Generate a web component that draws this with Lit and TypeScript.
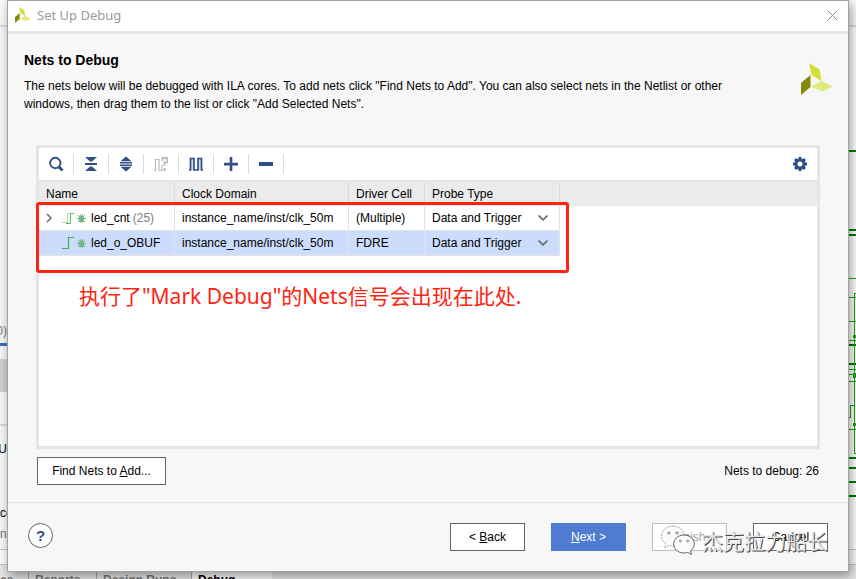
import { LitElement, html, css, svg } from "lit";
import { customElement, property } from "lit/decorators.js";

interface NetRow {
  name: string;
  count?: number;
  clock: string;
  driver: string;
  probe: string;
  bus: boolean;
  selected: boolean;
}

const NETS: NetRow[] = [
  { name: "led_cnt", count: 25, clock: "instance_name/inst/clk_50m", driver: "(Multiple)", probe: "Data and Trigger", bus: true, selected: false },
  { name: "led_o_OBUF", clock: "instance_name/inst/clk_50m", driver: "FDRE", probe: "Data and Trigger", bus: false, selected: true },
];

const PROBES = ["Data and Trigger", "Data", "Trigger"];

const TOOLS = [
  { label: "Search", icon: svg`<circle cx="7.300" cy="7" r="5.200" fill="none" stroke="#2f4f86" stroke-width="1.900"/><path d="M11 11L14.500 14.500" stroke="#2f4f86" stroke-width="3"/>` },
  { label: "Collapse All", icon: svg`<path d="M2 1h12l-5 4.5H7zM2 15h12l-5-4.5H7z" fill="#2f4f86"/><path d="M2 7h12v2H2z" fill="#2f4f86"/>` },
  { label: "Expand All", icon: svg`<path d="M8 0.500l5.500 4.700h-11zM8 15.500l5.500-4.700h-11z" fill="#2f4f86"/><path d="M2 6.100h12v1.400H2zM2 8.500h12v1.400H2z" fill="#2f4f86"/>` },
  { label: "Set clock domain", disabled: true, icon: svg`<path d="M1 14.500h1.500v-11H6v11h3V9" fill="none" stroke="#bdbdbd" stroke-width="1.200"/><path d="M9.500 5V2h4.500v4.500h-2.500V10" fill="none" stroke="#bdbdbd" stroke-width="1.800"/><path d="M10.600 12h2v3h-2z" fill="#bdbdbd"/>` },
  { label: "Show waveform", icon: svg`<path d="M2 3h4v11H2zM10 3h4v11h-4z" fill="#d3dae8"/><path d="M1 14h1.500V2.500H6V14h4V2.500h3.500V14H15" fill="none" stroke="#2f4f86" stroke-width="1.700"/>` },
  { label: "Add", icon: svg`<path d="M1 6.800h14v2.600H1zM6.700 1h2.600v14H6.700z" fill="#2f4f86"/>` },
  { label: "Remove", icon: svg`<path d="M1 6h14v4H1z" fill="#2f4f86"/>` },
];

const logo = (size: number) => html`<svg width=${size} height=${size} viewBox="0 0 32 32" aria-hidden="true">
  <path d="M8 0L18.500 6.500L20.500 18L10.500 12z" fill="#d3de36"/>
  <path d="M0 20L9.500 12v12L0 32z" fill="#868a0b"/>
  <path d="M10 23.500L20.500 18L32 23.500L21.500 28.500z" fill="#e2ea7c"/>
</svg>`;

@customElement("design-backdrop")
export class DesignBackdrop extends LitElement {
  static styles = css`
    :host { display: flex; flex-direction: column; overflow: hidden; background: #f7f7f7; font: 12px/18px "Liberation Sans", Arial, sans-serif; color: #000; }
    .top { height: 25px; flex: none; background: #f9f9f9; border-bottom: 2px solid #d9d9d9; }
    .middle { flex: 1; display: flex; justify-content: space-between; overflow: hidden; }
    .side { width: 7px; display: flex; flex-direction: column; overflow: hidden; }
    .frag { display: flex; height: 18px; white-space: nowrap; }
    .end { justify-content: flex-end; }
    .grey { color: #777; }
    .gap-l { height: 295px; flex: none; }
    .bar { height: 3px; margin-top: 3px; background: #3d6dc4; }
    .block { height: 33px; margin-top: 13px; background: #d2d2d2; }
    .rule { height: 2px; margin: 32px 0 14px; background: #d9d9d9; }
    .low { margin-top: 46px; }
    .lower { margin-top: 3px; }
    .right { width: 7px; background: #fff; }
    .status { height: 14px; flex: none; background: #fbfbfb; border-top: 1px solid #c4c4c4; border-bottom: 1px solid #c4c4c4; }
    .tabs { height: 14px; flex: none; display: flex; overflow: hidden; background: #e6e6e6; color: #777; font-weight: bold; font-size: 12px; }
    .tab { box-sizing: border-box; padding: 6px 6px 0; border-right: 1px solid #aaa; white-space: nowrap; }
    .t0 { width: 29px; padding-left: 0; }
    .t1 { width: 68px; }
    .t2 { width: 95px; }
    .t3 { width: 80px; border: 0; background: #f9f9f9; color: #000; }
  `;
  render() {
    return html`
      <div class="top"></div>
      <div class="middle">
        <div class="side">
          <div class="gap-l"></div>
          <div class="frag end grey">0)</div>
          <div class="bar"></div>
          <div class="block"></div>
          <div class="rule"></div>
          <div class="frag end">U</div>
          <div class="frag low">ce</div>
          <div class="frag lower grey">ne</div>
        </div>
        <svg class="right" height="522" viewBox="0 27 7 522" aria-hidden="true">
          <g fill="#007a00">
            ${[150, 229, 234, 344, 363, 457, 467, 481, 495].map((y) => svg`<rect x="0" y=${y} width="7" height="2"/>`)}
          </g>
          <g fill="#1ca60c">
            ${[278, 297, 321, 340, 369, 374, 381, 429].map((y) => svg`<rect x="0" y=${y} width="7" height="1"/>`)}
            <rect x="5" y="293" width="1" height="161"/><rect x="5" y="293" width="2" height="1"/><rect x="5" y="453" width="2" height="1"/>
            <rect x="4" y="335" width="3" height="3"/><rect x="4" y="373" width="3" height="5"/><rect x="4" y="423" width="3" height="3"/>
            <path d="M0 417h1v-12h5v1H2v12H0z"/>
          </g>
        </svg>
      </div>
      <div class="status"></div>
      <div class="tabs">
        <span class="tab t0">es</span><span class="tab t1">Reports</span><span class="tab t2">Design Runs</span><span class="tab t3">Debug</span>
      </div>`;
  }
}

@customElement("nets-table")
export class NetsTable extends LitElement {
  @property({ attribute: false }) rows: NetRow[] = [];
  static styles = css`
    :host { display: block; }
    .table { width: 100%; table-layout: fixed; border-collapse: separate; border-spacing: 0; font: 12px/16px "Liberation Sans", Arial, sans-serif; color: #000; }
    .name { width: 136px; }
    .clock { width: 174px; }
    .driver { width: 76px; }
    .probe { width: 135px; }
    th { box-sizing: border-box; height: 24px; padding: 0 0 0 7px; text-align: left; font-weight: normal; background: #ebebeb; border-right: 1px solid #dcdcdc; white-space: nowrap; }
    th:last-child, td:last-child { border: 0; }
    td { box-sizing: border-box; height: 25px; padding: 0 0 0 7px; border-right: 1px solid #e2e2e2; border-bottom: 1px solid #e2e2e2; white-space: nowrap; }
    .selected td:not(:last-child) { background: #cbdcfd; }
    .cell { display: flex; align-items: center; }
    .twist { width: 16px; height: 16px; padding: 0; border: 0; background: none; display: flex; align-items: center; }
    .bug { margin: 0 5px 0 2px; }
    .count { color: #808080; margin-left: 3px; }
    .pick { flex: 1; min-width: 0; appearance: none; border: 0; padding: 0; margin: 0; background: none; font: inherit; color: inherit; }
    .arrow { margin-right: 11px; }
  `;
  render() {
    return html`<table class="table">
      <colgroup><col class="name"><col class="clock"><col class="driver"><col class="probe"><col></colgroup>
      <thead><tr><th>Name</th><th>Clock Domain</th><th>Driver Cell</th><th>Probe Type</th><th></th></tr></thead>
      <tbody>${this.rows.map((r) => html`<tr class=${r.selected ? "selected" : ""}>
        <td><div class="cell">
          ${r.bus
            ? html`<button class="twist" aria-label="Expand ${r.name}"><svg width="6" height="10" viewBox="0 0 6 10"><path d="M1 1l4 4-4 4" fill="none" stroke="#666" stroke-width="1.500"/></svg></button>`
            : html`<span class="twist"></span>`}
          <svg width="13" height="12" viewBox="0 0 13 12" aria-hidden="true">
            ${r.bus ? svg`<path d="M0 10.500h5.500v-9H9" fill="none" stroke="#a9dcaa"/><path d="M4 11.500h4.500v-10H12" fill="none" stroke="#5cb85f"/>` : svg`<path d="M0 11.500h6.500v-11H12" fill="none" stroke="#49ae4e" stroke-width="1.200"/>`}
          </svg>
          <svg class="bug" width="9" height="9" viewBox="0 0 9 9" aria-hidden="true">
            <ellipse cx="4.500" cy="5" rx="2.700" ry="3.500" fill="#6fb684"/>
            <path d="M1 1l2 2M8 1L6 3M0 4.500h9M1 8l2-2M8 8L6 6M3 1h3" stroke="#6fb684" fill="none"/>
          </svg>
          <span>${r.name}</span>${r.count ? html`<span class="count">(${r.count})</span>` : ""}
        </div></td>
        <td>${r.clock}</td>
        <td>${r.driver}</td>
        <td><div class="cell">
          <select class="pick" aria-label="Probe type of ${r.name}">${PROBES.map((p) => html`<option ?selected=${p === r.probe}>${p}</option>`)}</select>
          <svg class="arrow" width="10" height="6" viewBox="0 0 10 6" aria-hidden="true"><path d="M0.500 0.500L5 4.800L9.500 0.500" fill="none" stroke="#707070" stroke-width="1.800"/></svg>
        </div></td>
        <td></td>
      </tr>`)}</tbody>
    </table>`;
  }
}

@customElement("app-root")
export class AppRoot extends LitElement {
  static styles = css`
    :host { display: flex; position: relative; min-height: 100vh; box-sizing: border-box; padding: 0 7px 7px; overflow: hidden; font: 12px/18px "Liberation Sans", Arial, sans-serif; color: #000; }
    .backdrop { position: absolute; inset: 0; }
    .dialog { position: relative; flex: 1; min-width: 0; display: flex; flex-direction: column; background: #f7f7f7; border: 1px solid #a3a3a3; box-shadow: 2px 4px 10px rgba(0, 0, 0, 0.4); }
    .title { display: flex; align-items: center; gap: 6px; box-sizing: border-box; height: 33px; padding: 0 10px 2px 7px; background: #fff; border-bottom: 3px solid #e6e6e6; font: 13px/18px "Noto Sans", sans-serif; color: #999; }
    .caption { flex: 1; }
    .close { display: flex; padding: 0; border: 0; background: none; }
    .intro { display: flex; justify-content: space-between; padding: 17px 15px 0 16px; }
    .heading { margin: 0 0 8px; font-size: 14px; line-height: 18px; }
    .text { margin: 0; max-width: 724px; }
    .brand { padding-top: 12px; flex: none; }
    .panel { position: relative; flex: 1; margin: 32px 28px 0; border: 3px solid #e6e6e6; background: #fff; min-height: 200px; }
    .toolbar { display: flex; align-items: center; height: 32px; border-bottom: 2px solid #e6e6e6; }
    .tool { width: 35px; height: 20px; padding: 0; border: 0; border-right: 1px solid #dcdcdc; background: none; display: flex; align-items: center; justify-content: center; }
    .settings { margin-left: auto; border: 0; }
    .mark { position: absolute; box-sizing: border-box; left: -3px; top: 54px; width: 533px; height: 71px; border: 3px solid #ff2412; border-radius: 3px; pointer-events: none; }
    .note { position: absolute; left: 40px; top: 133px; margin: 0; font: 21px/30px "Noto Sans", "Noto Sans CJK SC", sans-serif; color: #ff2412; white-space: nowrap; }
    .below { display: flex; align-items: center; justify-content: space-between; padding: 8px 29px 17px; }
    .footer { position: relative; display: flex; align-items: flex-start; gap: 26px; padding: 20px; border-top: 1px solid #e3e3e3; }
    .btn { box-sizing: border-box; width: 75px; height: 28px; padding: 0; border: 1px solid #666; background: #fff; font: inherit; color: #000; }
    .find { width: 129px; }
    .primary { background: #4f7cd0; border-color: #4f7cd0; color: #fff; }
    .off { border-color: #bdbdbd; color: #a0a0a0; }
    .help { box-sizing: border-box; width: 25px; height: 25px; padding: 0; margin-right: auto; border: 1px solid #666; border-radius: 50%; background: #fff; color: #2f4f86; font: bold 15px/20px "Liberation Sans", Arial, sans-serif; }
    .stamp { position: absolute; right: 20px; bottom: 16px; display: flex; align-items: center; gap: 6px; font: 21px/30px "Noto Sans CJK SC", sans-serif; color: #e4e4e4; text-shadow: 1px 1px 0 #444; pointer-events: none; }
  `;
  render() {
    return html`
      <design-backdrop class="backdrop"></design-backdrop>
      <main class="dialog">
        <header class="title">
          ${logo(16)}<span class="caption">Set Up Debug</span>
          <button class="close" aria-label="Close"><svg width="11" height="11" viewBox="0 0 11 11"><path d="M0.500 0.500l10 10M10.500 0.500l-10 10" stroke="#888" fill="none"/></svg></button>
        </header>
        <section class="intro">
          <div>
            <h1 class="heading">Nets to Debug</h1>
            <p class="text">The nets below will be debugged with ILA cores. To add nets click "Find Nets to Add". You can also select nets in the Netlist or other windows, then drag them to the list or click "Add Selected Nets".</p>
          </div>
          <div class="brand">${logo(32)}</div>
        </section>
        <section class="panel">
          <div class="toolbar">
            ${TOOLS.map((t) => html`<button class="tool" aria-label=${t.label} ?disabled=${!!t.disabled}><svg width="16" height="16" viewBox="0 0 16 16">${t.icon}</svg></button>`)}
            <button class="tool settings" aria-label="Settings"><svg width="16" height="16" viewBox="0 0 16 16">
              <circle cx="8" cy="8" r="4" fill="none" stroke="#2f4f86" stroke-width="3"/>
              ${[0, 45, 90, 135].map((a) => svg`<path d="M6.500 1h3v2.500h-3zM6.500 12.500h3V15h-3z" fill="#2f4f86" transform="rotate(${a} 8 8)"/>`)}
            </svg></button>
          </div>
          <nets-table .rows=${NETS}></nets-table>
          <div class="mark"></div>
          <p class="note">执行了"Mark Debug"的Nets信号会出现在此处.</p>
        </section>
        <div class="below">
          <button class="btn find">Find Nets to <u>A</u>dd...</button>
          <span>Nets to debug: 26</span>
        </div>
        <footer class="footer">
          <button class="help" aria-label="Help">?</button>
          <button class="btn">&lt; <u>B</u>ack</button>
          <button class="btn primary"><u>N</u>ext &gt;</button>
          <button class="btn off" disabled><u>F</u>inish</button>
          <button class="btn">Cancel</button>
          <div class="stamp">
            <svg width="36" height="30" viewBox="0 0 36 30" aria-hidden="true">
              <g fill="#fafafa" stroke="#aaa" stroke-width="1">
                <path d="M13 1C6.500 1 1.500 5.500 1.500 11c0 3.200 1.700 6 4.300 7.800L4.500 23l4.600-2.400c1.300.4 2.600.5 3.900.5 6.400 0 11.500-4.500 11.500-10S19.400 1 13 1z" stroke-dasharray="2 1"/>
                <path d="M24 10c-5.700 0-10.300 4-10.300 9s4.600 9 10.300 9c1.300 0 2.500-.2 3.600-.6l4 2-1-3.600c2.300-1.600 3.700-4 3.700-6.800 0-5-4.600-9-10.300-9z" stroke="#666"/>
              </g>
              <g fill="none" stroke="#888"><circle cx="9" cy="8" r="1.200"/><circle cx="17" cy="8" r="1.200"/><circle cx="20.500" cy="16" r="1"/><circle cx="27.500" cy="16" r="1"/></g>
            </svg>
            <span>杰克拉力船长</span>
          </div>
        </footer>
      </main>`;
  }
}
